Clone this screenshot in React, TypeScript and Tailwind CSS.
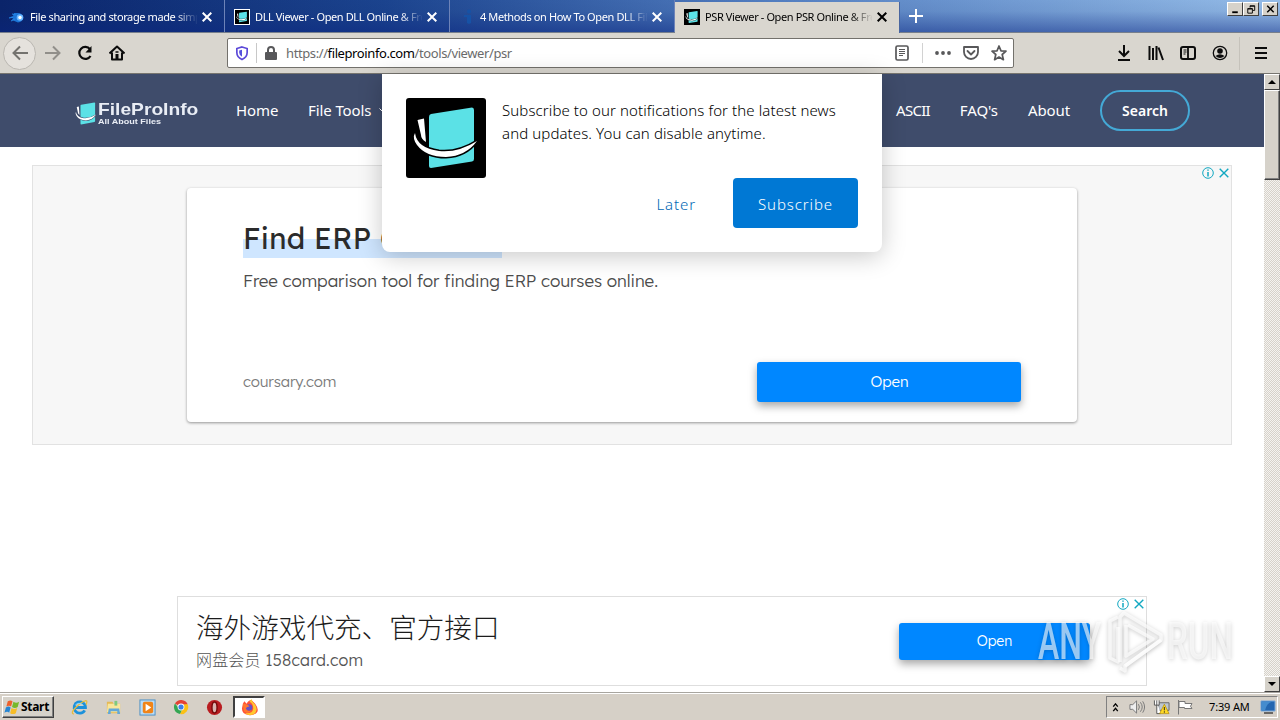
import type { ReactNode } from "react";
import { clsx } from "clsx";

const BrandMark = ({ className, dark = true }: { className?: string; dark?: boolean }) => (
  <svg viewBox="0 0 80 80" className={className} preserveAspectRatio="none">
    {dark && <rect width="80" height="80" fill="#000" />}
    <path d="M25 16 66 9.500Q68 9.500 68 12V61Q68 63 66 63.500L25 70Q23 70 23 68V19Q23 16.500 25 16Z" fill="#5be1e6" />
    <g fill="#fff" stroke={dark ? "#000" : "#3f4c6b"} strokeWidth="3" paintOrder="stroke" strokeLinejoin="round">
      <path d="M9 35Q11 50 33 53 52 55 71 43 60 58 40 59 20 59 11 47 6 40 9 35Z" />
      <path d="M11.500 22 18 20.500 20 44Q15 41 15 37Z" />
    </g>
  </svg>
);

const Cross = ({ className }: { className?: string }) => (
  <svg viewBox="0 0 10 10" className={className} fill="none" stroke="currentColor">
    <path d="m.7.700 8.600 8.600M9.300.7.7 9.300" />
  </svg>
);

interface TabProps {
  title: string;
  icon: ReactNode;
  active?: boolean;
}

const Tab = ({ title, icon, active }: TabProps) => (
  <div
    className={clsx(
      "flex w-[225px] shrink-0 items-center border-r pl-[9px]",
      active
        ? "mt-[2px] h-[31px] border-[#4966a0] bg-[#d9d6cf] pb-px text-black"
        : "h-[32px] border-[#6d83b8] pt-[2px] text-white"
    )}
  >
    <div className="h-4 w-4 shrink-0">{icon}</div>
    <div className="ml-[5px] w-[167px] overflow-hidden text-[11px] tracking-[-0.39px] whitespace-nowrap [mask-image:linear-gradient(to_right,black_145px,transparent_168px)]">
      {title}
    </div>
    <Cross className="ml-[5px] h-[10px] w-[10px] shrink-0 stroke-2" />
  </div>
);

const bevel = "border border-t-white border-l-white border-r-[#404040] border-b-[#404040] bg-[#d6d2ca]";

const WindowButton = ({ children }: { children: ReactNode }) => (
  <div className={clsx("h-[14px] w-4", bevel)}>
    <svg viewBox="0 0 14 13" className="h-3 w-[14px]" fill="none" stroke="#000">
      {children}
    </svg>
  </div>
);

const TabStrip = () => (
  <div className="relative flex h-[33px] shrink-0 border-b border-[#777f8c] bg-[linear-gradient(to_bottom,rgba(10,36,106,0.05),rgba(10,36,106,0.1)_35%,rgba(10,36,126,0.5)),linear-gradient(to_right,#0a246a,#1c4590_30%,#5682c4_60%,#9cc4ee)] font-['Noto_Sans',sans-serif]">
    <Tab
      title="File sharing and storage made simple"
      icon={
        <svg viewBox="0 0 16 16">
          <path d="M0 8.500 4 7 5 4h4a5 4.600 0 1 1 0 9.500L3 11 4 9Z" fill="#1c74d6" />
          <path d="m0 9 4-.7M2 12l4-2M3 5l4 1" stroke="#2585e5" />
          <circle cx="11" cy="8.500" r="3.300" fill="#67b5ff" />
          <circle cx="11" cy="8.500" r="1.700" fill="#fff" />
        </svg>
      }
    />
    <Tab title="DLL Viewer - Open DLL Online & Free" icon={<BrandMark className="h-4 w-4 border border-white" />} />
    <Tab
      title="4 Methods on How To Open DLL Files"
      icon={
        <svg viewBox="0 0 16 16" fill="#1652a6">
          <circle cx="10" cy="2.500" r="2" />
          <path d="M5 6h7v8l-2 1-2-1V8H5Z" />
        </svg>
      }
    />
    <Tab title="PSR Viewer - Open PSR Online & Free" active icon={<BrandMark className="h-4 w-4" />} />
    <svg className="mt-[9px] ml-[9px] h-[14px] w-[14px]" viewBox="0 0 14 14" stroke="#fff" strokeWidth="2">
      <path d="M7 0v14M0 7h14" />
    </svg>
    <div className="ml-auto flex pt-[2px] pr-[2px]">
      <WindowButton>
        <path d="M4 10h6" strokeWidth="2" />
      </WindowButton>
      <WindowButton>
        <path d="M6 3h5v5M6 3.500h5M6 3v2M3.500 6h5v5h-5zM3.500 6.500h5M9 8h2" />
      </WindowButton>
      <div className="w-[3px]" />
      <WindowButton>
        <path d="m4 3 7 7M11 3l-7 7" strokeWidth="1.600" />
      </WindowButton>
    </div>
  </div>
);

const Toolbar = () => (
  <div className="flex h-[41px] shrink-0 items-center border-b border-[#77756f] bg-[#d9d6cf] font-['Noto_Sans',sans-serif]">
    <div className="ml-[3px] flex h-[33px] w-[33px] items-center justify-center rounded-full border border-[#bab7b1] bg-[#e5e2dd]">
      <svg viewBox="0 0 16 16" className="h-4 w-4" fill="none" stroke="#74736f" strokeWidth="2">
        <path d="M16 8H1.500M8 1.500 1.500 8 8 14.500" />
      </svg>
    </div>
    <svg viewBox="0 0 16 16" className="ml-[9px] h-4 w-4" fill="none" stroke="#918f8a" strokeWidth="2">
      <path d="M0 8h14.500M8 1.500 14.500 8 8 14.500" />
    </svg>
    <svg viewBox="0 0 16 16" className="ml-4 h-4 w-4" fill="none" stroke="#0c0c0c" strokeWidth="2.200">
      <path d="M13 4.200A6 6 0 1 0 13.500 11" />
      <path d="M14.500 1v6.500H8.500Z" fill="#0c0c0c" stroke="none" />
    </svg>
    <svg viewBox="0 0 16 16" className="ml-4 h-4 w-4" fill="none" stroke="#0c0c0c" strokeWidth="2">
      <path d="m.5 8.500 7.500-7 7.500 7M3 7.500v7h10v-7" strokeLinejoin="round" />
      <path d="M8 9v5" strokeWidth="3" />
      <path d="M6.500 7h3" strokeWidth="1.500" />
    </svg>

    <div className="ml-[102px] flex h-[30px] w-[787px] items-center rounded-[2px] border border-[#73716c] bg-white">
      <svg viewBox="0 0 14 16" className="ml-[7px] h-[15px] w-[14px]">
        <path d="M7 1 12.500 2.700V7q0 5-5.500 7.500Q1.500 12 1.500 7V2.700Z" fill="none" stroke="#5c49d8" strokeWidth="1.800" />
        <path d="M7 4v7.500Q4 10 4 7V4.700Z" fill="#5550dc" />
      </svg>
      <div className="ml-[7px] h-5 w-px bg-[#c8c8c8]" />
      <svg viewBox="0 0 12 14" className="ml-2 h-[14px] w-3">
        <rect y="6" width="12" height="8" rx="1" fill="#58585a" />
        <path d="M3 7V4a3 3 0 0 1 6 0v3" fill="none" stroke="#58585a" strokeWidth="2" />
      </svg>
      <div className="ml-[9px] pt-px text-[13px] tracking-[-0.4px] whitespace-nowrap text-[#6b6b6b]">
        https://<span className="text-black">fileproinfo.com</span>/tools/viewer/psr
      </div>
      <svg viewBox="0 0 14 16" className="ml-auto h-4 w-[14px]" fill="none" stroke="#58585a">
        <rect x="1" y="1" width="12" height="14" rx="1.500" strokeWidth="1.700" />
        <path d="M4 4.500h6M4 6.500h6M4 8.500h6M4 10.500h4" />
      </svg>
      <div className="ml-[13px] h-5 w-px bg-[#d2d2d2]" />
      <svg viewBox="0 0 16 4" className="ml-3 h-1 w-4" fill="#58585a">
        <circle cx="2" cy="2" r="1.900" />
        <circle cx="8" cy="2" r="1.900" />
        <circle cx="14" cy="2" r="1.900" />
      </svg>
      <svg viewBox="0 0 16 14" className="ml-3 h-[14px] w-4" fill="none" stroke="#58585a" strokeWidth="1.800" strokeLinejoin="round">
        <path d="M1 1h14v5a7 7 0 0 1-14 0Z" />
        <path d="m4.500 5 3.500 3.500L11.500 5" strokeLinecap="round" />
      </svg>
      <svg viewBox="0 0 16 16" className="mr-[6px] ml-3 h-4 w-4" fill="none" stroke="#58585a" strokeWidth="1.700" strokeLinejoin="round">
        <path d="m8 1 2 4.800 5 .4-3.800 3.300 1.200 5.200L8 12l-4.400 2.700 1.200-5.200L1 6.200l5-.4Z" />
      </svg>
    </div>

    <div className="mr-[13px] ml-auto flex items-center text-[#0c0c0c]">
      <svg viewBox="0 0 14 16" className="mr-[17px] h-4 w-[14px]" fill="none" stroke="currentColor" strokeWidth="2">
        <path d="M7 0v11M2 6l5 5 5-5M1 15h12" />
      </svg>
      <svg viewBox="0 0 16 16" className="mr-4 h-4 w-4" fill="none" stroke="currentColor" strokeWidth="2">
        <path d="M1.500 1v14M5 3v12M8.500 1v14M10.500 2.500 15 15" />
      </svg>
      <svg viewBox="0 0 16 14" className="mr-4 h-[14px] w-4" fill="none" stroke="currentColor">
        <rect x="1" y="1" width="14" height="12" rx="2" strokeWidth="2" />
        <path d="M8 1v12" strokeWidth="1.800" />
        <path d="M3.500 4h3M3.500 6h3M3.500 8h2" />
      </svg>
      <svg viewBox="0 0 16 16" className="mr-[11px] h-4 w-4">
        <circle cx="8" cy="8" r="6.700" fill="none" stroke="currentColor" strokeWidth="1.300" />
        <circle cx="8" cy="6" r="2.800" fill="currentColor" />
        <path d="M3.500 11Q8 7.500 12.500 11 8 15 3.500 11Z" fill="currentColor" />
      </svg>
      <div className="mr-[15px] h-[33px] w-px bg-[#c5c2bb]" />
      <svg viewBox="0 0 12 12" className="h-3 w-3" stroke="currentColor" strokeWidth="2">
        <path d="M0 1h12M0 6h12M0 11h12" />
      </svg>
    </div>
  </div>
);

const SiteHeader = () => (
  <div className="flex h-[73px] shrink-0 items-center bg-[#3f4c6b] pr-[74px] pl-[73px] font-['Noto_Sans',sans-serif] text-[15px] text-white">
    <BrandMark dark={false} className="mt-[6px] h-[29px] w-[26px] shrink-0" />
    <div className="-ml-px w-[103px] pt-[7px] font-['Liberation_Sans',sans-serif] font-bold">
      <div className="h-[14px] w-max origin-left scale-x-[1.13] text-[17px] leading-[16px] text-[#e9edf5]">FileProInfo</div>
      <div className="h-[10px] w-max origin-left scale-x-[1.13] text-[8px] leading-[11px] text-[#e9edf5]">All About Files</div>
    </div>
    <div className="ml-[35px] w-[72px] tracking-[-0.1px]">Home</div>
    <div className="flex items-center gap-2 tracking-[-0.1px] whitespace-nowrap">
      File Tools
      <svg viewBox="0 0 8 5" className="h-[5px] w-2" fill="none" stroke="#fff">
        <path d="m.5.500 3.500 3.500L7.500.500" />
      </svg>
    </div>
    <div className="ml-auto tracking-[-0.75px]">ASCII</div>
    <div className="ml-[30px] tracking-[-0.1px]">FAQ's</div>
    <div className="ml-[30px] tracking-[-0.1px]">About</div>
    <div className="ml-[30px] flex h-[41px] w-[90px] items-center justify-center rounded-full border-2 border-[#44a9d6] text-[14px] font-semibold tracking-[0px]">
      Search
    </div>
  </div>
);

const AdChoices = () => (
  <div className="absolute top-px right-[2.500px] flex items-center gap-[5px] text-[#12a8c1]">
    <svg viewBox="0 0 12 12" className="h-3 w-3" fill="none" stroke="currentColor">
      <circle cx="6" cy="6" r="5.300" />
      <path d="M6 5v4.500M6 2.600v1.200" strokeWidth="1.500" />
    </svg>
    <Cross className="h-[10px] w-[10px] stroke-[1.4]" />
  </div>
);

const TopAd = () => (
  <div className="relative mt-[18px] ml-8 h-[280px] w-[1200px] shrink-0 border border-[#e2e2e2] bg-[#f7f7f7] pt-[22px] pl-[154px] font-['Lexend','Inter',sans-serif] font-light">
    <div className="flex h-[234px] w-[890px] flex-col rounded bg-white px-[56px] pt-[31px] shadow-[0_1px_3px_rgba(0,0,0,0.4)]">
      <div className="w-[259px] bg-[linear-gradient(transparent_20px,#cfe6ff_20px)] text-[29px] leading-[39px] font-normal tracking-[0.35px] whitespace-nowrap text-[#2b2b2b]">
        Find ERP Courses
      </div>
      <div className="mt-[12px] text-[17px] leading-[22px] tracking-[-0.05px] whitespace-nowrap text-[#4c4c4c]">
        Free comparison tool for finding ERP courses online.
      </div>
      <div className="mt-[70px] flex items-center justify-between">
        <div className="text-[15px] tracking-[-0.15px] text-[#7b7b7b]">coursary.com</div>
        <div className="flex h-10 w-[264px] items-center justify-center rounded-[3px] bg-[#0087ff] pt-px pl-px text-[15px] text-white shadow-[0_4px_9px_rgba(0,0,0,0.35)]">
          Open
        </div>
      </div>
    </div>
    <AdChoices />
  </div>
);

const BottomAd = () => (
  <div className="relative mt-[151px] ml-[177px] flex h-[90px] w-[970px] shrink-0 items-center justify-between border border-[#dedede] bg-white pr-[56px] pl-[18px] font-['Lexend','Noto_Sans_CJK_SC',sans-serif] font-light">
    <div>
      <div className="text-[27.600px] leading-[34px] whitespace-nowrap text-[#1c1c1c]">海外游戏代充、官方接口</div>
      <div className="mt-[4px] text-[16px] leading-[22px] tracking-[0.17px] text-[#555]">网盘会员 158card.com</div>
    </div>
    <div className="flex h-[37px] w-[191px] items-center justify-center rounded-[3px] bg-[#0087ff] text-[14px] text-white shadow-[0_4px_9px_rgba(0,0,0,0.35)]">
      Open
    </div>
    <AdChoices />
  </div>
);

// Push permission prompt that drops over the page
const SubscribePrompt = () => (
  <div className="absolute top-0 left-[382px] flex h-[178px] w-[500px] flex-col rounded-b-[8px] bg-white p-6 font-['Noto_Sans',sans-serif] font-light shadow-[0_4px_24px_rgba(0,0,0,0.22)]">
    <div className="flex h-[80px] shrink-0 gap-4">
      <BrandMark className="h-20 w-20 shrink-0 rounded-[3px]" />
      <div className="pt-px text-[15px] leading-[23px] tracking-[0.1px] whitespace-nowrap text-black">
        <div>Subscribe to our notifications for the latest news</div>
        <div>and updates. You can disable anytime.</div>
      </div>
    </div>
    <div className="flex items-center justify-end text-[15px] tracking-[0.9px]">
      <div className="mr-[37px] pt-[2px] text-[#0068b5]">Later</div>
      <div className="flex h-[50px] w-[125px] items-center justify-center rounded-[4px] bg-[#0078d4] pt-[2px] text-white">Subscribe</div>
    </div>
  </div>
);

const ScrollBar = () => (
  <div className="flex w-4 shrink-0 flex-col bg-[#e9e6e1] bg-[repeating-conic-gradient(#d6d2ca_0_25%,#f5f3f0_0_50%)] bg-[length:2px_2px]">
    <div className={clsx("flex h-4 items-center justify-center", bevel)}>
      <svg viewBox="0 0 8 4" className="h-1 w-2">
        <path d="M0 4 4 0l4 4Z" />
      </svg>
    </div>
    <div className={clsx("h-[90px] shadow-[inset_-1px_-1px_#808080]", bevel)} />
    <div className={clsx("mt-auto flex h-4 items-center justify-center", bevel)}>
      <svg viewBox="0 0 8 4" className="h-1 w-2">
        <path d="M0 0h8L4 4Z" />
      </svg>
    </div>
  </div>
);

const Watermark = () => (
  <svg
    viewBox="0 0 200 70"
    className="absolute top-[532px] left-[1035px] h-[70px] w-[200px] [filter:drop-shadow(0_1px_2px_rgba(0,0,0,0.3))]"
    fill="#fff"
    fillOpacity="0.600"
    fontFamily="Roboto, sans-serif"
    fontSize="52"
    fontWeight="500"
  >
    <text x="3" y="53" textLength="63" lengthAdjust="spacingAndGlyphs">ANY</text>
    <text x="132" y="53" textLength="66" lengthAdjust="spacingAndGlyphs">RUN</text>
    <g fill="none" stroke="#fff" strokeOpacity="0.700" strokeWidth="3.500" strokeLinejoin="round">
      <path d="M83 11 75 15v37l8 4V21" />
      <path d="M85 56V11l4-4 37 22v5l-36 26v5l-5-3" />
      <path d="m93 19 25 14-27 17V19" />
      <path d="m90 60 36-26" />
    </g>
  </svg>
);

const Taskbar = () => (
  <div className="flex h-[28px] shrink-0 items-center border-t border-[#a8a59f] bg-[#d6d0c7] px-[2px] pt-px font-['Noto_Sans',sans-serif] text-[11px] shadow-[inset_0_1px_#fff]">
    <div className={clsx("flex h-[22px] w-[52px] items-center shadow-[inset_-1px_-1px_#808080]", bevel)}>
      <svg viewBox="0 0 18 16" className="ml-px h-4 w-[17px] shrink-0">
        <path d="M4 2q3-2 5 0L7.500 7.500q-2-1.500-5 0Z" fill="#ed612d" />
        <path d="M10 2.500q3 2 6 0L14.500 8q-3 2-6 0Z" fill="#77b82b" />
        <path d="M2 8.500q3-2 5 0L5.500 14q-2-2-5 0Z" fill="#2585d3" />
        <path d="M8 9q3 2 6 0l-1.500 5.500q-3 2-6 0Z" fill="#f7bd27" />
      </svg>
      <span className="text-[12px] font-bold tracking-[-0.3px]">Start</span>
    </div>
    <div className="ml-[17px] flex items-center gap-[17px]">
      <svg viewBox="0 0 18 18" className="h-[17px] w-[17px]" fill="none">
        <path d="M14.500 12a6 6 0 1 1 .8-3H4" stroke="#1c91db" strokeWidth="3" />
        <path d="M3 16Q-1 15 5 9T15 2q3-1 1 4" stroke="#e6bc3d" strokeWidth="1.300" />
        <path d="M4.500 6.500q4-4 8 0" stroke="#8ed8fb" />
      </svg>
      <svg viewBox="0 0 18 18" className="h-[17px] w-[17px]">
        <path d="M2 3h6l1 2h7v10H2Z" fill="#e4b956" />
        <path d="M3 5h13v9H2Z" fill="#f9e69b" />
        <path d="M4 10h11l1 6h-3v-3H6v3H3Z" fill="#63a8d8" />
        <path d="M10 2h3v5h-3Z" fill="#7fc97d" />
      </svg>
      <svg viewBox="0 0 18 18" className="h-[17px] w-[17px]">
        <rect x="1" y="1" width="16" height="16" fill="#b9dcf7" stroke="#4a8fc4" />
        <rect x="4" y="3" width="11" height="12" rx="2" fill="#f08418" />
        <path d="m7 5 6 4-6 4Z" fill="#fff" />
      </svg>
      <svg viewBox="0 0 18 18" className="h-[16px] w-[16px]">
        <path d="M2.200 5A8 8 0 0 1 16.500 6L9 9Z" fill="#e34235" />
        <path d="M2.200 5A8 8 0 0 0 8 17l3-6-4 0Z" fill="#34a653" />
        <path d="M16.500 6A8 8 0 0 1 8 17l4-8V6Z" fill="#fbc116" />
        <circle cx="9" cy="9" r="3.800" fill="#fff" />
        <circle cx="9" cy="9" r="2.900" fill="#3b7fe9" />
      </svg>
      <svg viewBox="0 0 18 18" className="h-[17px] w-[17px]">
        <circle cx="9" cy="9" r="8" fill="#b91d20" />
        <ellipse cx="9" cy="9" rx="2.700" ry="5.800" fill="#d9b6b0" stroke="#770909" strokeWidth="1.500" />
      </svg>
    </div>
    <div className="ml-[10px] flex h-[22px] w-8 items-center justify-center border-2 border-t-[#404040] border-r-white border-b-white border-l-[#404040] bg-white">
      <svg viewBox="0 0 18 18" className="h-[17px] w-[17px]">
        <path d="M2 5 3.500 2.500 6 5q2-4 5-4l4 4q5 7 1 10t-8 2Q1 16 1 10Z" fill="#ff5136" />
        <path d="M11 0q1 4 4 6 3 5 0 9-5 4-11 0 8 1 9-5 0-5-4-7Z" fill="#ffc92f" />
        <circle cx="8.500" cy="9" r="3.500" fill="#6752c5" />
        <path d="M2 5q5 0 7 3-3 0-4 2 2 4 6 2-3 5-8 1Z" fill="#ff762e" />
      </svg>
    </div>
    <div className="ml-auto flex h-[22px] w-[172px] items-center border border-t-[#808080] border-r-white border-b-white border-l-[#808080] pl-[5px]">
      <svg viewBox="0 0 7 10" className="h-[9px] w-[7px]" fill="none" stroke="#000" strokeWidth="1.500">
        <path d="m1 4 2.500-3L6 4M1 9l2.500-3L6 9" />
      </svg>
      <svg viewBox="0 0 18 16" className="ml-[10px] h-4 w-[17px]" fill="#eee" stroke="#777">
        <path d="M1 5.500h3l4-4v13l-4-4H1Z" />
        <path d="M10 5q2 3 0 6M12 3q4 5 0 10M14.500 2q4 6 0 12" fill="none" />
      </svg>
      <svg viewBox="0 0 18 16" className="ml-[7px] h-4 w-[17px]">
        <path d="M6 3.500h11v8H6Z" fill="#bcc5cf" stroke="#666" />
        <path d="M1.500 1v5h5V1M4 1v14h4" fill="#fff" stroke="#555" />
        <path d="m12 5 5 10H7Z" fill="#ffd925" stroke="#b18800" strokeWidth=".700" />
        <path d="M12 8v3.500M12 12.500V14" stroke="#222" />
      </svg>
      <svg viewBox="0 0 16 16" className="ml-[7px] h-4 w-4" fill="#fff" stroke="#777">
        <path d="M1.500 1v14.500M2 2.500h6v2h7q-3 3 0 5H7.500v-1H2Z" />
      </svg>
      <span className="ml-4 tracking-[-0.15px] whitespace-nowrap">7:39 AM</span>
      <svg viewBox="0 0 16 16" className="mr-px ml-auto h-4 w-4">
        <path d="M1 2h14v10H1Z" fill="#2466b0" stroke="#7aa7d8" />
        <path d="M1.500 2.500H14q-7 0-9 9H1.500Z" fill="#458cce" />
        <path d="M4 14h9" stroke="#444" strokeWidth="1.500" />
      </svg>
    </div>
  </div>
);

export default function App() {
  return (
    <div className="flex h-[720px] w-[1280px] flex-col overflow-hidden bg-white">
      <TabStrip />
      <Toolbar />
      <div className="relative flex h-[618px] shrink-0">
        <div className="flex w-[1264px] shrink-0 flex-col overflow-hidden">
          <SiteHeader />
          <TopAd />
          <BottomAd />
        </div>
        <ScrollBar />
        <SubscribePrompt />
        <Watermark />
      </div>
      <Taskbar />
    </div>
  );
}
